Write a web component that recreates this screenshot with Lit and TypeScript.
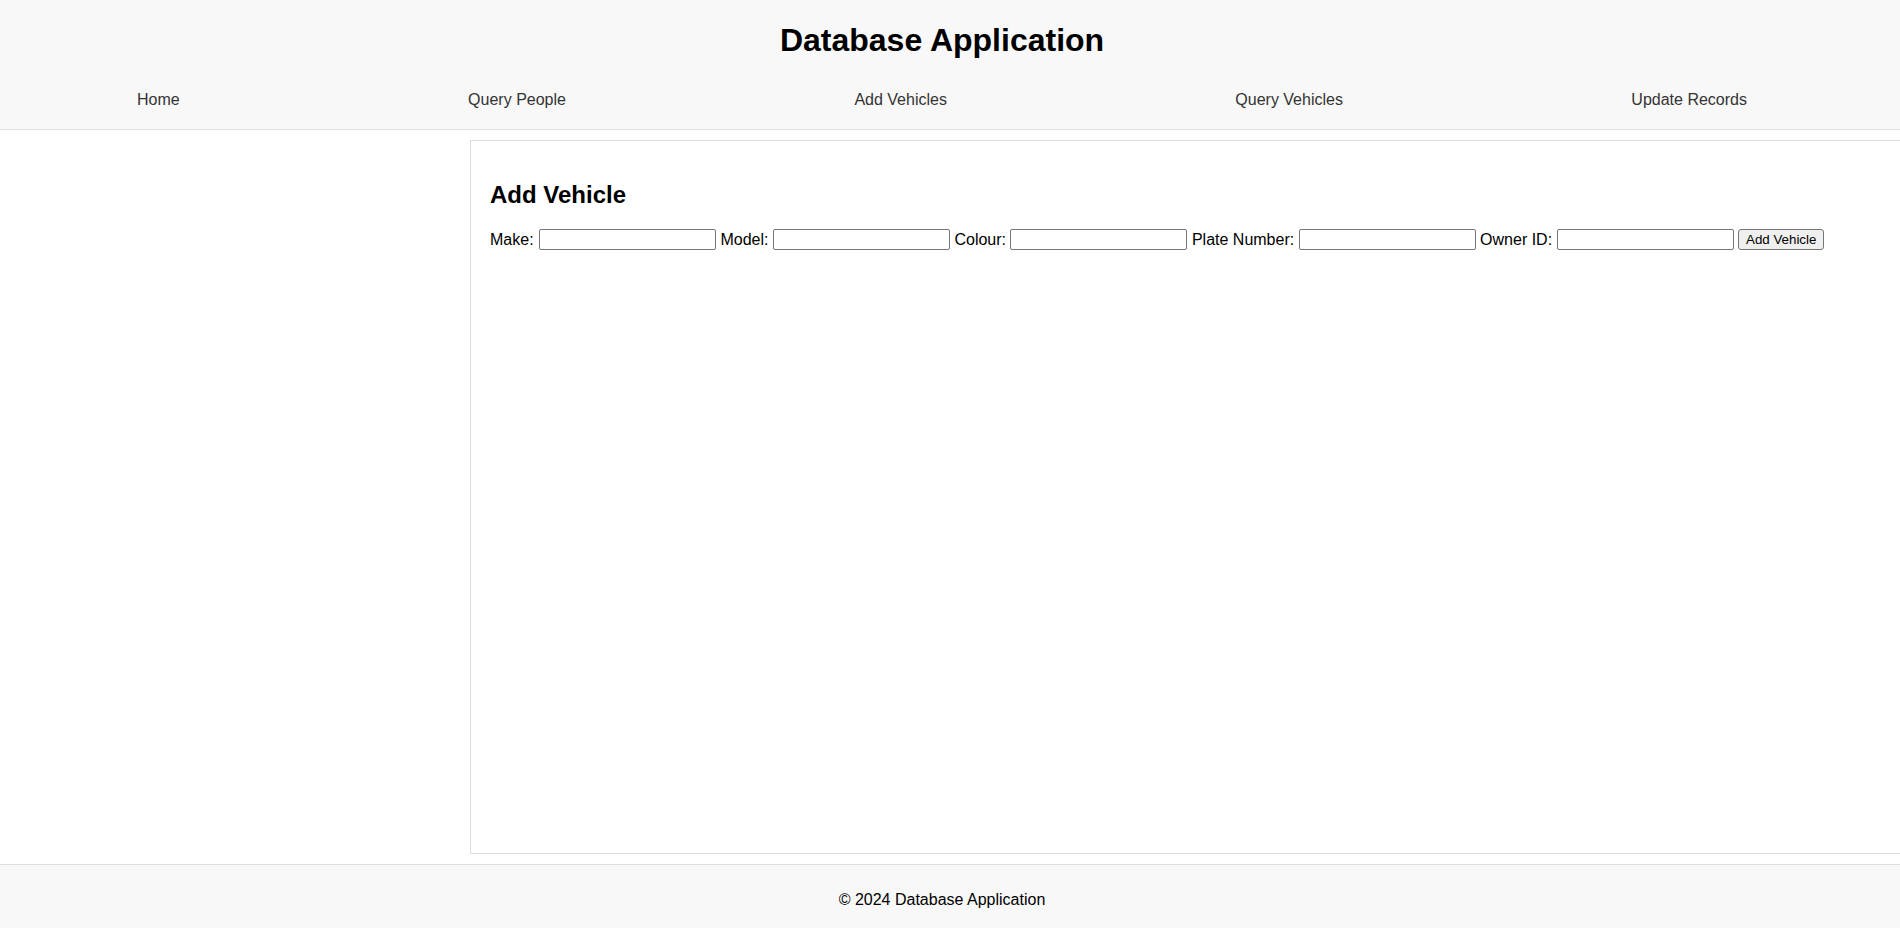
import { LitElement, html, css } from "lit";
import { customElement } from "lit/decorators.js";

@customElement("app-root")
export class AppRoot extends LitElement {
  static styles = css`
    :host {
      display: flex;
      flex-direction: column;
      width: 1900px;
      height: 928px;
      overflow: hidden;
      font-family: "Liberation Sans", Arial, sans-serif;
      font-size: 16px;
      color: #000;
      background: #fff;
    }
    header {
      flex: none;
      height: 129px;
      background: #f8f8f8;
      border-bottom: 1px solid #ddd;
      box-sizing: content-box;
    }
    .title-row {
      width: 1884px;
      padding-top: 22px;
      text-align: center;
    }
    h1 {
      margin: 0;
      font-size: 32px;
      line-height: 37px;
      font-weight: 700;
    }
    nav {
      width: 1884px;
      box-sizing: border-box;
      padding: 32px 137px 0;
      display: flex;
      justify-content: space-between;
    }
    nav a {
      color: #333;
      text-decoration: none;
      line-height: 18px;
    }
    main {
      flex: 1;
      min-height: 0;
      display: flex;
      padding: 10px 0 10px 470px;
      overflow: hidden;
    }
    .box {
      flex: none;
      width: 1460px;
      box-sizing: border-box;
      border: 1px solid #ddd;
      padding: 40px 19px 0;
    }
    h2 {
      margin: 0 0 19px;
      font-size: 24px;
      line-height: 28px;
      font-weight: 700;
    }
    form {
      white-space: nowrap;
      line-height: 21px;
    }
    input {
      box-sizing: border-box;
      width: 177px;
      height: 21px;
      margin: 0;
      padding: 1px 2px;
      border: 1px solid #767676;
      border-radius: 2px;
      background: #fff;
      font: 13.33px "Liberation Sans", Arial, sans-serif;
      vertical-align: middle;
    }
    input.first {
      margin-left: 1px;
    }
    label {
      vertical-align: middle;
    }
    button {
      box-sizing: border-box;
      height: 21px;
      margin: 0;
      padding: 1px 7px;
      border: 1px solid #767676;
      border-radius: 3px;
      background: #efefef;
      color: #000;
      font: 13.33px "Liberation Sans", Arial, sans-serif;
      vertical-align: middle;
    }
    footer {
      flex: none;
      height: 63px;
      background: #f8f8f8;
      border-top: 1px solid #ddd;
      box-sizing: content-box;
    }
    footer p {
      width: 1884px;
      margin: 0;
      padding-top: 26px;
      text-align: center;
      line-height: 18px;
    }
  `;

  render() {
    return html`
      <header>
        <div class="title-row"><h1>Database Application</h1></div>
        <nav>
          <a href="#">Home</a>
          <a href="#">Query People</a>
          <a href="#">Add Vehicles</a>
          <a href="#">Query Vehicles</a>
          <a href="#">Update Records</a>
        </nav>
      </header>
      <main>
        <section class="box">
          <h2>Add Vehicle</h2>
          <form>
            <label>Make:</label> <input class="first" type="text" />
            <label>Model:</label> <input type="text" />
            <label>Colour:</label> <input type="text" />
            <label>Plate Number:</label> <input type="text" />
            <label>Owner ID:</label> <input type="text" />
            <button type="button">Add Vehicle</button>
          </form>
        </section>
      </main>
      <footer><p>© 2024 Database Application</p></footer>
    `;
  }
}
